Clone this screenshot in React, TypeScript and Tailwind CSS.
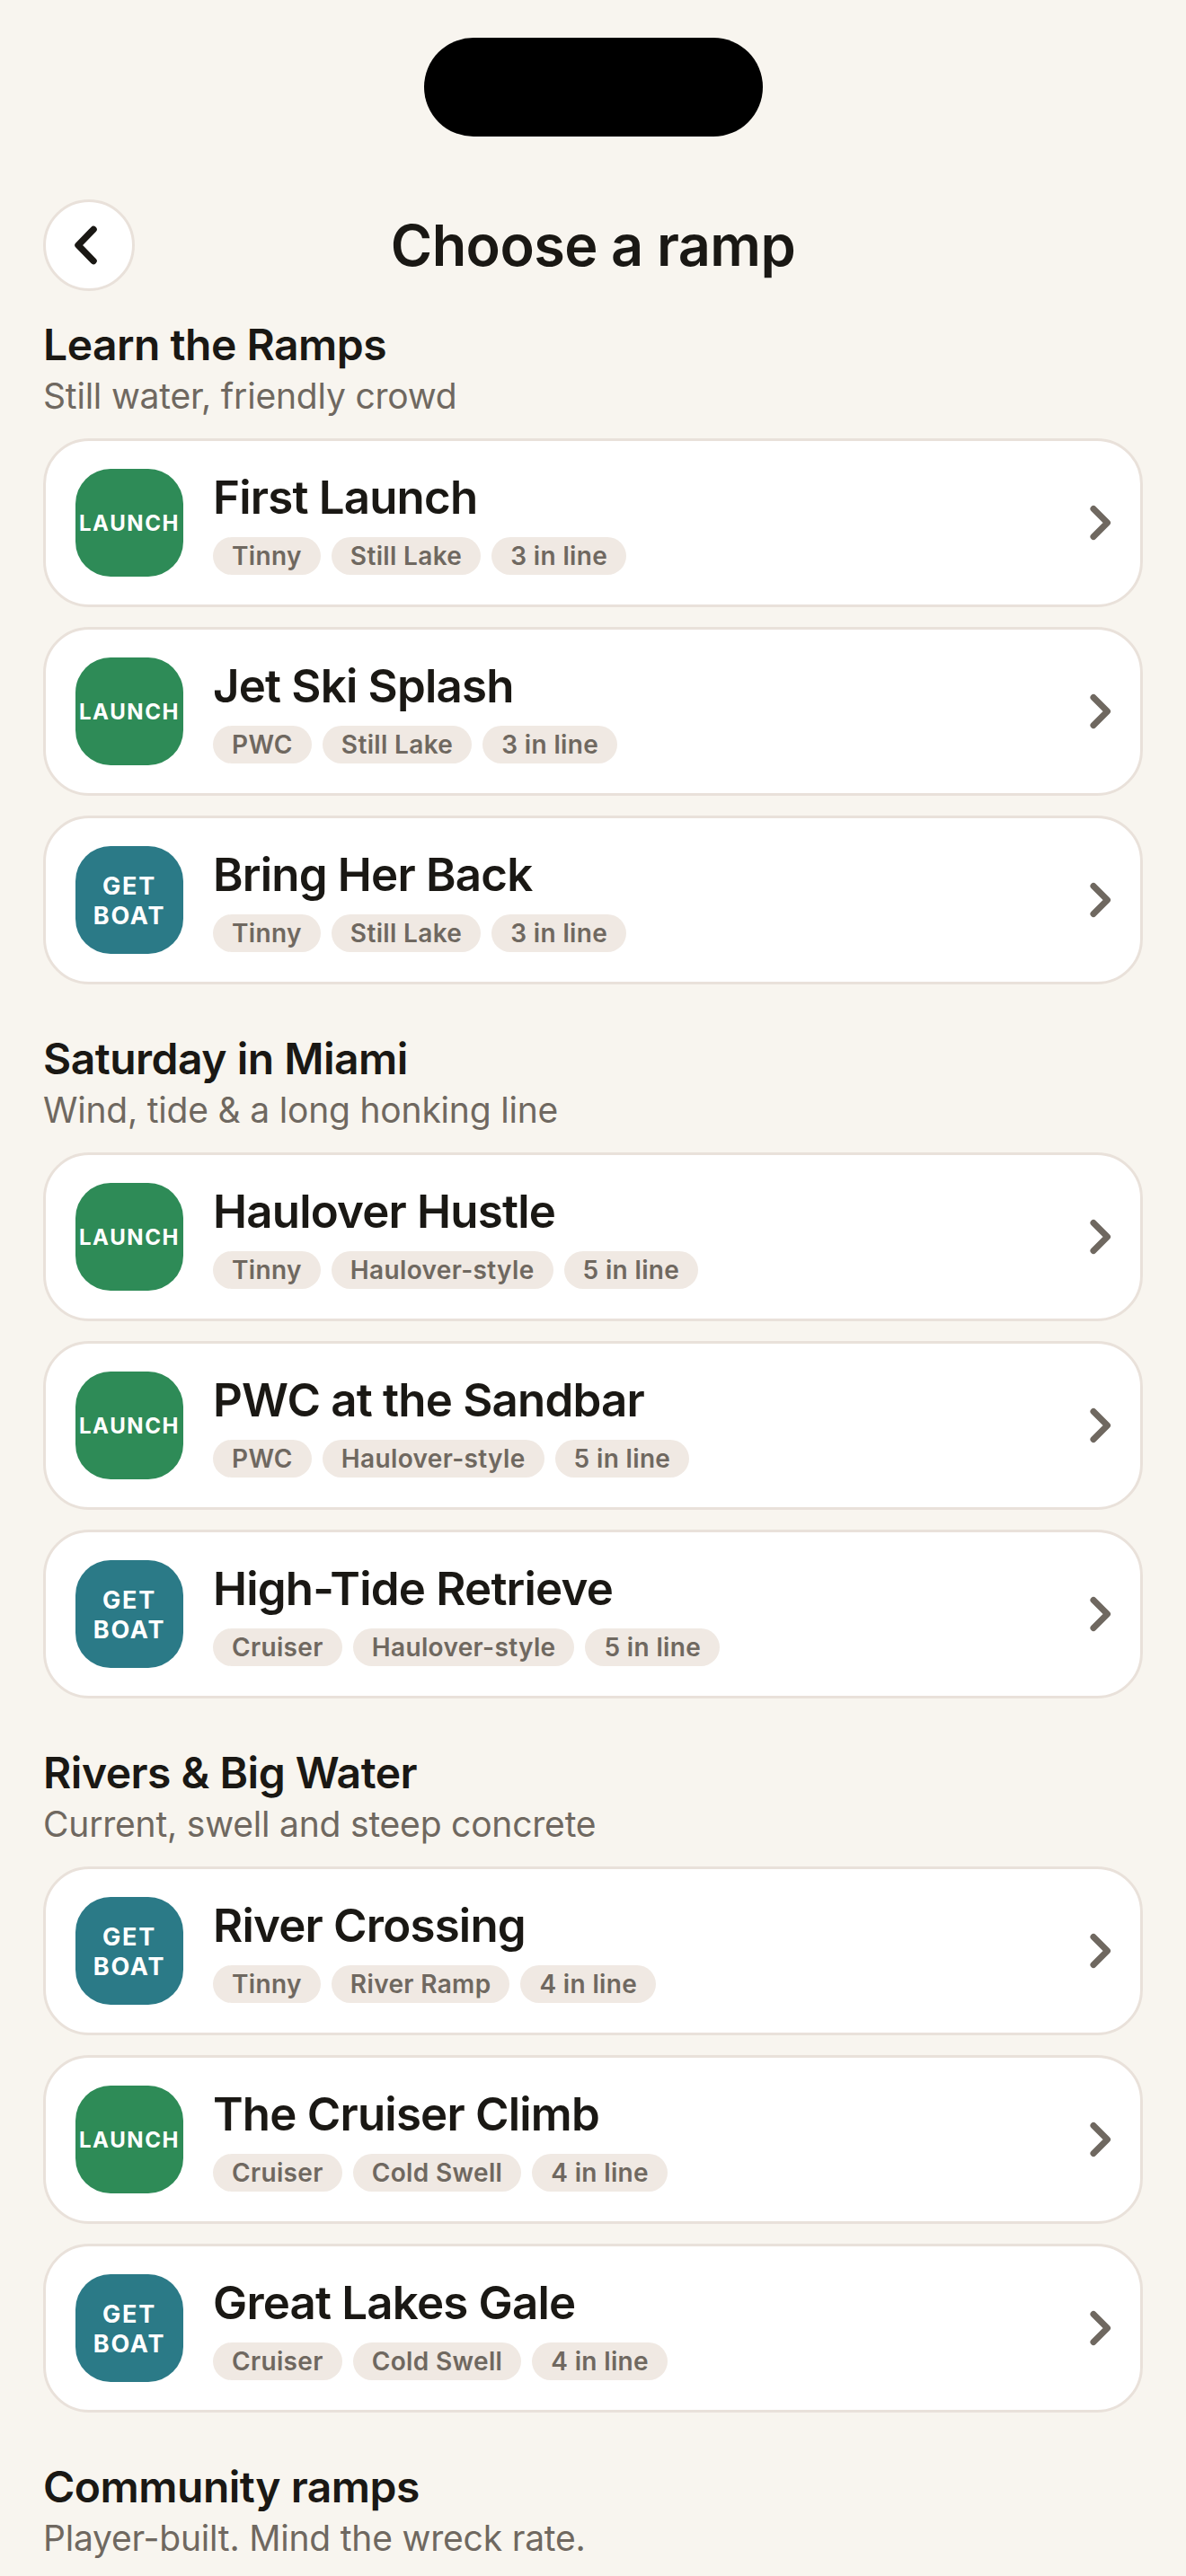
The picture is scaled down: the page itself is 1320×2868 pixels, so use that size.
const sections = [
  {
    title: "Learn the Ramps",
    sub: "Still water, friendly crowd",
    ramps: [
      { name: "First Launch", kind: "launch", tags: ["Tinny", "Still Lake", "3 in line"] },
      { name: "Jet Ski Splash", kind: "launch", tags: ["PWC", "Still Lake", "3 in line"] },
      { name: "Bring Her Back", kind: "boat", tags: ["Tinny", "Still Lake", "3 in line"] },
    ],
  },
  {
    title: "Saturday in Miami",
    sub: "Wind, tide & a long honking line",
    ramps: [
      { name: "Haulover Hustle", kind: "launch", tags: ["Tinny", "Haulover-style", "5 in line"] },
      { name: "PWC at the Sandbar", kind: "launch", tags: ["PWC", "Haulover-style", "5 in line"] },
      { name: "High-Tide Retrieve", kind: "boat", tags: ["Cruiser", "Haulover-style", "5 in line"] },
    ],
  },
  {
    title: "Rivers & Big Water",
    sub: "Current, swell and steep concrete",
    ramps: [
      { name: "River Crossing", kind: "boat", tags: ["Tinny", "River Ramp", "4 in line"] },
      { name: "The Cruiser Climb", kind: "launch", tags: ["Cruiser", "Cold Swell", "4 in line"] },
      { name: "Great Lakes Gale", kind: "boat", tags: ["Cruiser", "Cold Swell", "4 in line"] },
    ],
  },
];

function RampCard({ ramp }: { ramp: { name: string; kind: string; tags: string[] } }) {
  return (
    <div className="flex h-[188px] items-center rounded-[51px] border-[3px] border-[#e9e1da] bg-white pl-[33px] pr-[22px]">
      {ramp.kind === "launch" ? (
        <div className="flex h-[120px] w-[120px] shrink-0 items-center justify-center rounded-[39px] bg-[#2e8b57] text-[24px] font-bold leading-[33px] tracking-[1.6px] text-white">
          LAUNCH
        </div>
      ) : (
        <div className="flex h-[120px] w-[120px] shrink-0 items-center justify-center rounded-[39px] bg-[#2b7a87] pt-[2px] text-center text-[27px] font-bold leading-[33px] tracking-[1.8px] text-white">
          GET
          <br />
          BOAT
        </div>
      )}
      <div className="ml-[33px] min-w-0 flex-1">
        <div className="text-[51px] font-semibold leading-[60px] tracking-[-0.8px] text-[#1a1814]">{ramp.name}</div>
        <div className="mt-[14px] flex gap-[12px]">
          {ramp.tags.map((t) => (
            <span key={t} className="flex h-[42px] items-center rounded-full bg-[#f0e9e3] px-[21px] text-[28px] font-semibold leading-none tracking-[0.35px] text-[#6f6860]">
              {t}
            </span>
          ))}
        </div>
      </div>
      <svg width="48" height="48" viewBox="0 0 48 48" fill="none" className="shrink-0">
        <path d="M18 8.5 L33.5 24 L18 39.5" stroke="#6f6860" strokeWidth="7" strokeLinecap="round" strokeLinejoin="round" />
      </svg>
    </div>
  );
}

export default function App() {
  return (
    <div className="h-[2868px] overflow-hidden bg-[#f8f5ef] px-[48px] font-['Inter',sans-serif]">
      {/* Notch */}
      <div className="flex justify-center pt-[42px]">
        <div className="h-[110px] w-[377px] rounded-[55px] bg-black"></div>
      </div>

      {/* Header */}
      <div className="relative mt-[70px] flex h-[102px] items-center justify-center">
        <button className="absolute left-0 top-0 flex h-[102px] w-[102px] items-center justify-center rounded-full border-[3px] border-[#e9e1da] bg-white">
          <svg width="48" height="48" viewBox="0 0 48 48" fill="none">
            <path d="M29 6.5 L12 24 L29 41.5" stroke="#1a1814" strokeWidth="7.5" strokeLinecap="round" strokeLinejoin="round" />
          </svg>
        </button>
        <h1 className="text-[63px] font-semibold leading-[80px] tracking-[-0.6px] text-[#1a1814]">Choose a ramp</h1>
      </div>

      {sections.map((s, i) => (
        <div key={s.title} className={i === 0 ? "mt-[30px]" : "mt-[53px]"}>
          <div className="text-[48px] font-semibold leading-[60px] tracking-[-0.5px] text-[#1a1814]">{s.title}</div>
          <div className="text-[39px] leading-[54px] tracking-[-0.2px] text-[#6f6860]">{s.sub}</div>
          <div className="mt-[20px] flex flex-col gap-[22px]">
            {s.ramps.map((r) => (
              <RampCard key={r.name} ramp={r} />
            ))}
          </div>
        </div>
      ))}

      <div className="mt-[53px]">
        <div className="text-[48px] font-semibold leading-[60px] tracking-[-0.5px] text-[#1a1814]">Community ramps</div>
        <div className="text-[39px] leading-[54px] tracking-[-0.2px] text-[#6f6860]">Player-built. Mind the wreck rate.</div>
      </div>
    </div>
  );
}
